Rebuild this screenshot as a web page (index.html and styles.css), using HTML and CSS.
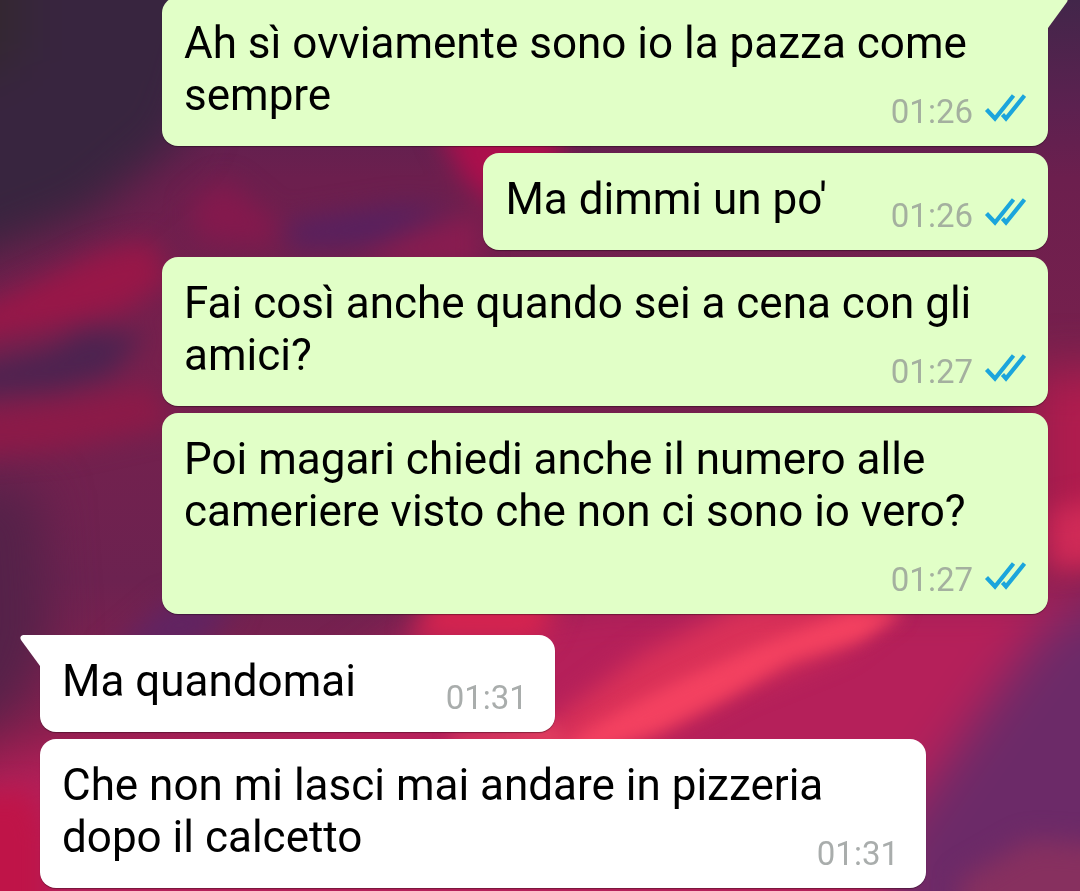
FILE: index.html
```html
<!DOCTYPE html>
<html lang="it">
<head>
<meta charset="utf-8">
<meta name="viewport" content="width=device-width, initial-scale=1">
<title>Chat</title>
<link rel="stylesheet" href="styles.css">
</head>
<body>
<svg class="wallpaper" viewBox="0 0 1080 891" preserveAspectRatio="none" aria-hidden="true">
  <defs>
    <linearGradient id="sky" x1="0" y1="0" x2="0" y2="1">
      <stop offset="0" stop-color="#42264a"/>
      <stop offset="0.12" stop-color="#5c2150"/>
      <stop offset="0.2" stop-color="#6c1f4e"/>
      <stop offset="0.4" stop-color="#77204d"/>
      <stop offset="0.65" stop-color="#6c2250"/>
      <stop offset="1" stop-color="#a81c4c"/>
    </linearGradient>
    <filter id="soft" color-interpolation-filters="sRGB" filterUnits="userSpaceOnUse" x="-150" y="-150" width="1380" height="1200"><feGaussianBlur stdDeviation="13"/></filter>
    <filter id="wide" color-interpolation-filters="sRGB" filterUnits="userSpaceOnUse" x="-150" y="-150" width="1380" height="1200"><feGaussianBlur stdDeviation="24"/></filter>
    <filter id="fine" color-interpolation-filters="sRGB" filterUnits="userSpaceOnUse" x="-150" y="-150" width="1380" height="1200"><feGaussianBlur stdDeviation="8"/></filter>
  </defs>
  <rect width="1080" height="891" fill="url(#sky)"/>
  <g filter="url(#wide)">
    <path d="M-90-90H250L180 140L90 215L-90 285Z" fill="#38253f"/>
    <path d="M-90-90H20V60L-90 100Z" fill="#33282f"/>
    <path d="M1030 370H1180V570H1030Z" fill="#b01c4e"/>
    <path d="M-90 800L60 750L300 715L440 620L600 590H1180V990H-90Z" fill="#b5205a"/>
    <path d="M990 700L1050 620L1180 570V990H890V840Z" fill="#6c2a68"/>
    <path d="M-90 470L40 490L50 640L20 710L-90 760Z" fill="#552249"/>
  </g>
  <g filter="url(#soft)">
    <path d="M435 125H560V220L500 210L465 180Z" fill="#ac0f4c"/>
    <path d="M190 205L225 180L280 225L270 245L200 240Z" fill="#84194d"/>
    <path d="M-90 330L0 300L100 252L150 240L170 280L125 310L60 325L-90 350Z" fill="#981748"/>
    <path d="M288 222L400 205L455 208L370 245L290 248Z" fill="#56215f"/>
    <path d="M350 262L420 232L480 212V270Z" fill="#891c50"/>
    <path d="M-90 380L50 350L85 330L145 335L110 375L60 388L-90 400Z" fill="#4c2350"/>
    <path d="M-90 420L60 402L150 385L175 425L60 450L-90 460Z" fill="#8c1a48"/>
    <path d="M1050 510L1150 490V555L1050 570Z" fill="#cf2a57"/>
    <path d="M430 600L560 600L540 640H410Z" fill="#d8244f"/>
    <path d="M-90 800L30 790L45 830V960H-90Z" fill="#bf1448"/>
    <path d="M170 600L240 605L200 645L100 660Z" fill="#602462"/>
    <path d="M580 700L640 655L740 605H900L840 650L740 690L640 745H520Z" fill="#da3158"/>
    <path d="M960 880L1030 840L1180 850V960H960Z" fill="#87305f"/>
  </g>
  <g filter="url(#fine)">
    <path d="M550 750L640 700L680 680L760 645L850 612H905L860 640L790 660L730 695L660 730L590 755Z" fill="#f34160"/>
    <path d="M450 736L560 725V745H450Z" fill="#e34060"/>
  </g>
</svg>

<main class="chat">
  <section class="group group-out">
    <article class="bubble out">
      <svg class="tail" viewBox="0 0 20 31" aria-hidden="true"><path d="M0 0H17Q21 1 19 5L0 31Z"/></svg>
      <p class="text">Ah sì ovviamente sono io la pazza come sempre<span class="reserve"></span></p>
      <div class="meta"><time>01:26</time><svg class="ticks" viewBox="0 0 42 29" role="img" aria-label="Letto"><path d="M2.5 15.5L11 24.5L29.5 1.5M18.5 20.5L22 24.5L40.5 1.5"/></svg></div>
    </article>
    <article class="bubble out">
      <p class="text">Ma dimmi un po'<span class="reserve"></span></p>
      <div class="meta"><time>01:26</time><svg class="ticks" viewBox="0 0 42 29" role="img" aria-label="Letto"><path d="M2.5 15.5L11 24.5L29.5 1.5M18.5 20.5L22 24.5L40.5 1.5"/></svg></div>
    </article>
    <article class="bubble out">
      <p class="text">Fai così anche quando sei a cena con gli amici?<span class="reserve"></span></p>
      <div class="meta"><time>01:27</time><svg class="ticks" viewBox="0 0 42 29" role="img" aria-label="Letto"><path d="M2.5 15.5L11 24.5L29.5 1.5M18.5 20.5L22 24.5L40.5 1.5"/></svg></div>
    </article>
    <article class="bubble out">
      <p class="text">Poi magari chiedi anche il numero alle cameriere visto che non ci sono io vero?<span class="reserve"></span></p>
      <div class="meta"><time>01:27</time><svg class="ticks" viewBox="0 0 42 29" role="img" aria-label="Letto"><path d="M2.5 15.5L11 24.5L29.5 1.5M18.5 20.5L22 24.5L40.5 1.5"/></svg></div>
    </article>
  </section>
  <section class="group group-in">
    <article class="bubble in first">
      <svg class="tail" viewBox="0 0 20 31" aria-hidden="true"><path d="M20 0H3Q-1 1 1 5L20 31Z"/></svg>
      <p class="text">Ma quandomai<span class="reserve"></span></p>
      <div class="meta"><time>01:31</time></div>
    </article>
    <article class="bubble in">
      <p class="text">Che non mi lasci mai andare in pizzeria dopo il calcetto<span class="reserve"></span></p>
      <div class="meta"><time>01:31</time></div>
    </article>
  </section>
</main>
</body>
</html>
```
FILE: styles.css
```css
* {
  box-sizing: border-box;
}

body {
  margin: 0;
  min-height: 100vh;
  overflow: hidden;
  background: #72224f;
  font-family: Roboto, "Noto Sans", sans-serif;
}

.wallpaper {
  position: fixed;
  inset: 0;
  width: 100%;
  height: 100%;
}

.chat {
  position: relative;
  display: flex;
  flex-direction: column;
  gap: 21px;
  margin-top: -3px;
  padding: 0 32px 0 40px;
}

.group {
  display: flex;
  flex-direction: column;
  gap: 7px;
}

.group-out {
  align-items: flex-end;
}

.group-in {
  align-items: flex-start;
}

.bubble {
  position: relative;
  display: grid;
  max-width: 886px;
  padding: 20px 22px 25px;
  border-radius: 16px;
  box-shadow: 0 1px 1px rgba(0, 0, 0, 0.35);
}

.out {
  background: #e1ffc7;
}

.in {
  background: #fff;
}

.first {
  border-top-left-radius: 0;
}

.text {
  grid-area: 1 / 1;
  margin: 0;
  color: #000;
  font-size: 44px;
  line-height: 52px;
}

.reserve {
  display: inline-block;
  height: 1px;
}

.out .reserve {
  width: 199px;
}

.in .reserve {
  width: 177px;
}

.meta {
  grid-area: 1 / 1;
  place-self: end;
  display: flex;
  align-items: baseline;
  gap: 11px;
  margin-bottom: -10px;
  color: #a9adac;
  font-size: 33px;
  line-height: 38px;
}

.out .meta {
  color: #a4b09f;
}

.in .meta {
  padding-right: 5px;
}

.ticks {
  width: 42px;
  height: 29px;
  fill: none;
  stroke: #1ba5dc;
  stroke-width: 4.2;
}

.tail {
  position: absolute;
  top: 0;
  width: 20px;
  height: 31px;
}

.out .tail {
  left: 100%;
  fill: #e1ffc7;
}

.in .tail {
  right: 100%;
  fill: #fff;
}

.out:first-child {
  border-top-right-radius: 0;
}
```
